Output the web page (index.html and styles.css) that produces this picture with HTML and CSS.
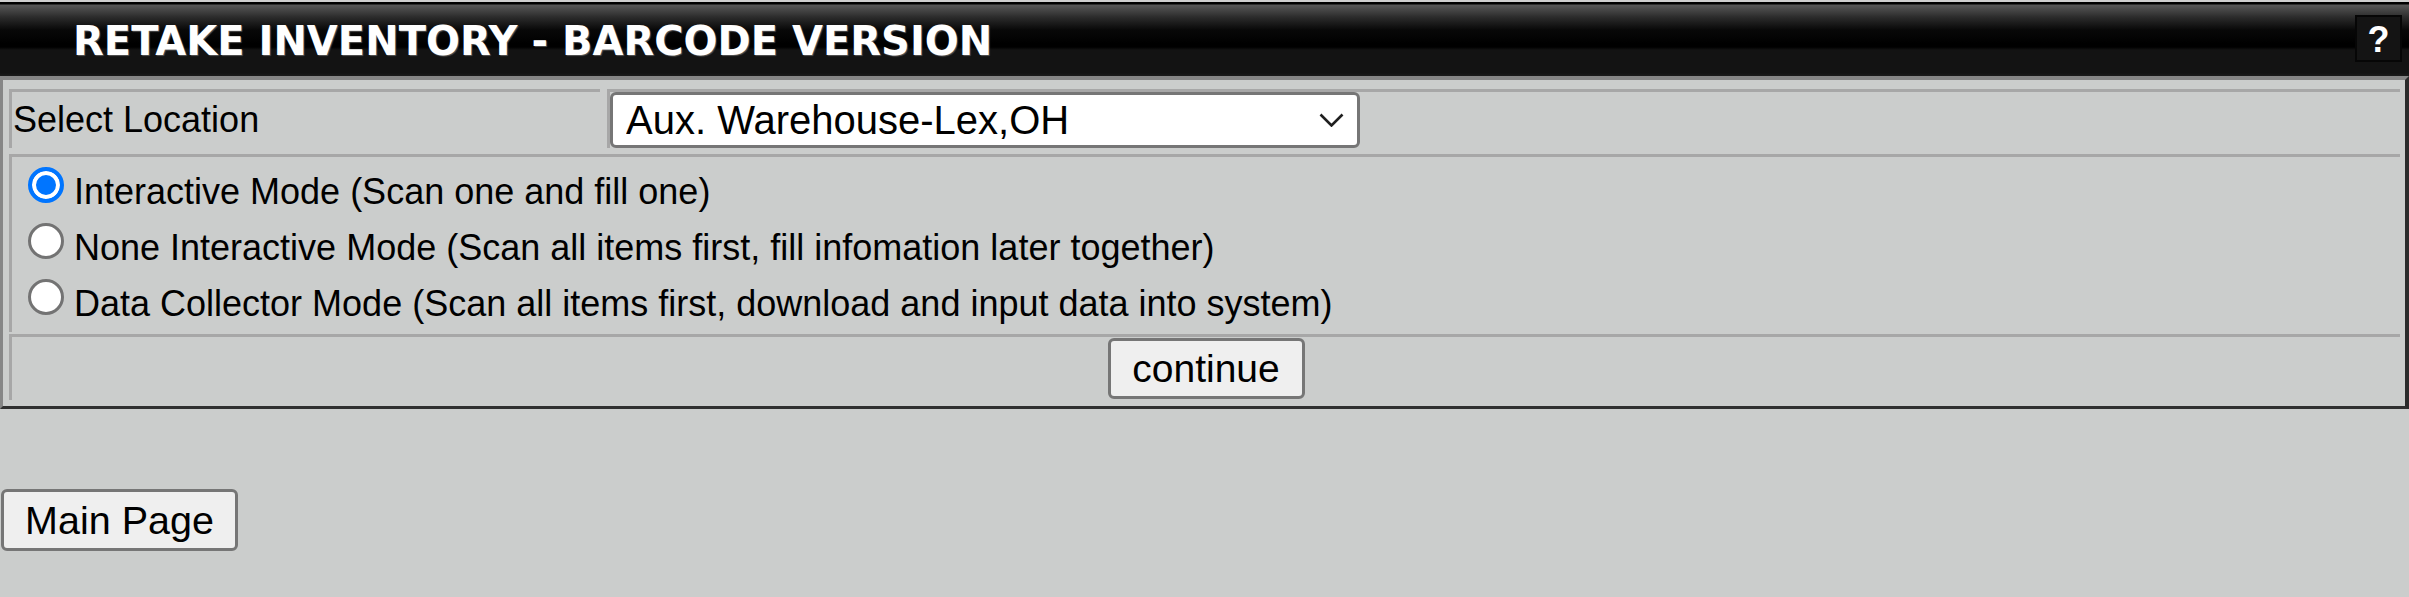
FILE: index.html
```html
<!DOCTYPE html>
<html>
<head>
<meta charset="utf-8">
<title>Retake Inventory - Barcode Version</title>
<link rel="stylesheet" href="styles.css">
</head>
<body>
<div class="header">
  <h1 class="title">RETAKE INVENTORY - BARCODE VERSION</h1>
  <span class="help">?</span>
</div>
<div class="panel">
  <div class="row-loc">
    <div class="cell cell-label">Select Location</div>
    <div class="cell cell-select">
      <span class="select-wrap">
        <select class="loc-select"><option>Aux. Warehouse-Lex,OH</option></select>
        <svg class="chevron" viewBox="0 0 25 14" width="25" height="14"><polyline points="1.5,1.5 12.5,12.5 23.5,1.5" fill="none" stroke="#1f1f1f" stroke-width="2.6"/></svg>
      </span>
    </div>
  </div>
  <div class="cell cell-modes">
    <label class="mode"><input type="radio" name="mode" checked><span class="mode-text">Interactive Mode (Scan one and fill one)</span></label>
    <label class="mode"><input type="radio" name="mode"><span class="mode-text">None Interactive Mode (Scan all items first, fill infomation later together)</span></label>
    <label class="mode"><input type="radio" name="mode"><span class="mode-text">Data Collector Mode (Scan all items first, download and input data into system)</span></label>
  </div>
  <div class="cell cell-action"><button class="btn btn-continue">continue</button></div>
</div>
<button class="btn btn-main">Main Page</button>
</body>
</html>
```
FILE: styles.css
```css
html, body {
  margin: 0;
  background: #cbcdcc;
  font-family: "Liberation Sans", Arial, sans-serif;
  color: #000;
}

.header {
  height: 76px;
  box-sizing: border-box;
  display: flex;
  align-items: center;
  justify-content: space-between;
  padding: 0 7px 0 73px;
  background: linear-gradient(to bottom,
    #cfcfcf 0, #cfcfcf 2px,
    #000 2px, #000 4px,
    #585858 5px, #2c2c2c 17px, #080808 30px,
    #000 44px, #000 47px,
    #131313 50px, #131313 73px,
    #1c1c1c 76px);
}

.title {
  margin: 0;
  padding-top: 7px;
  font-family: "DejaVu Sans", Verdana, sans-serif;
  font-weight: bold;
  font-size: 40px;
  line-height: 1.164;
  color: #fff;
  text-shadow: 1px 1px 1px #555;
}

.help {
  width: 47px;
  height: 47px;
  box-sizing: border-box;
  padding-top: 4px;
  border: 2px solid #060606;
  background: #141414;
  color: #fff;
  font-family: "Liberation Sans", Arial, sans-serif;
  font-weight: bold;
  font-size: 36px;
  display: flex;
  align-items: center;
  justify-content: center;
}

.panel {
  border-style: solid;
  border-width: 4px 4px 3px 3px;
  border-color: #868686 #2b2b2b #303030 #868686;
  padding: 9px 5px 6px 6px;
}

.cell {
  border-top: 3px solid #a7a7a7;
  border-left: 3px solid #a7a7a7;
}

.row-loc {
  display: flex;
  gap: 7px;
  margin-bottom: 6px;
}

.cell-label {
  width: 591px;
  box-sizing: border-box;
  display: flex;
  align-items: center;
  padding-left: 1px;
  font-size: 36px;
}

.cell-select {
  flex: 1;
  display: flex;
}

.select-wrap {
  position: relative;
  display: block;
  width: 750px;
  height: 56px;
}

.loc-select {
  appearance: none;
  -webkit-appearance: none;
  display: block;
  margin: 0;
  width: 750px;
  height: 56px;
  box-sizing: border-box;
  border: 3px solid #767676;
  border-radius: 6px;
  background: #fff;
  color: #000;
  font-family: "Liberation Sans", Arial, sans-serif;
  font-size: 40px;
  padding: 0 0 0 13px;
}

.chevron {
  position: absolute;
  left: 709px;
  top: 21px;
}

.cell-modes {
  padding-top: 7px;
  margin-bottom: 2px;
}

.mode {
  display: flex;
  align-items: flex-start;
  height: 56px;
  padding-left: 16px;
  font-size: 36px;
}

.mode-text {
  line-height: 56px;
}

.mode input {
  appearance: none;
  -webkit-appearance: none;
  margin: 3px 10px 0 0;
  width: 36px;
  height: 36px;
  box-sizing: border-box;
  border: 3px solid #737373;
  border-radius: 50%;
  background: #fff;
  flex: none;
}

.mode input:checked {
  border: 4px solid #0075ff;
  background: #0075ff;
  box-shadow: inset 0 0 0 4px #fff;
}

.cell-action {
  display: flex;
  justify-content: center;
  padding: 1px 0;
}

.btn {
  font-family: "Liberation Sans", Arial, sans-serif;
  font-size: 39px;
  color: #000;
  background: #efefef;
  border: 3px solid #767676;
  border-radius: 6px;
  padding: 0;
  margin: 0;
  box-sizing: border-box;
}

.btn-continue {
  width: 197px;
  height: 61px;
}

.btn-main {
  display: block;
  width: 237px;
  height: 62px;
  margin: 80px 0 0 1px;
  font-size: 39.5px;
}
```
